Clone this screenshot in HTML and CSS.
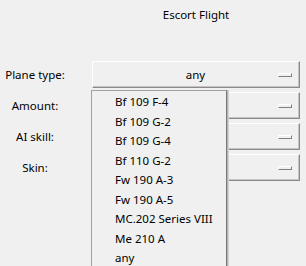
FILE: index.html
```html
<!DOCTYPE html>
<html lang="en">
<head>
    <meta charset="UTF-8">
    <title>Escort Flight</title>
    <link rel="stylesheet" href="styles.css">
</head>
<body>
    <div id="dialog">
        <div class="title-row">
            <div class="title">Escort Flight</div>
        </div>

        <div class="form">
            <div class="label">Plane type:</div>
            <div class="combo"><span class="value">any</span><span class="arrow"></span></div>

            <div class="label">Amount:</div>
            <div class="combo"><span class="value"></span><span class="arrow"></span></div>

            <div class="label">AI skill:</div>
            <div class="combo"><span class="value"></span><span class="arrow"></span></div>

            <div class="label">Skin:</div>
            <div class="combo"><span class="value"></span><span class="arrow"></span></div>
        </div>

        <!-- open list of the first combo -->
        <ul class="popup">
            <li>Bf 109 F-4</li>
            <li>Bf 109 G-2</li>
            <li>Bf 109 G-4</li>
            <li>Bf 110 G-2</li>
            <li>Fw 190 A-3</li>
            <li>Fw 190 A-5</li>
            <li>MC.202 Series VIII</li>
            <li>Me 210 A</li>
            <li>any</li>
        </ul>
    </div>
</body>
</html>
```

FILE: styles.css
```css
html, body {
    margin: 0;
    padding: 0;
    height: 100%;
    background-color: #f0f0f0;
}

body {
    font-family: "Noto Sans", "Open Sans", sans-serif;
    font-size: 11.5px;
    color: #000;
    overflow: hidden;
}

#dialog {
    position: relative;
    height: 100%;
    overflow: hidden;
}

.title-row {
    display: grid;
    grid-template-columns: 68px 1fr;
    column-gap: 24px;
    padding: 6px 6px 0 0;
    height: 55px;
    box-sizing: border-box;
}

.title {
    grid-column: 2;
    text-align: center;
    line-height: 18px;
}

.form {
    display: grid;
    grid-template-columns: 70px 1fr;
    grid-auto-rows: 27px;
    column-gap: 22px;
    row-gap: 4px;
    padding: 6px 6px 0 0;
}

.label {
    text-align: center;
    line-height: 27px;
    white-space: nowrap;
}

.combo {
    display: flex;
    align-items: center;
    box-sizing: border-box;
    border-top: 1px solid #fff;
    border-left: 1px solid #fff;
    border-right: 1px solid #8a8a8a;
    border-bottom: 1px solid #8a8a8a;
    box-shadow: inset -1px -1px 0 #c4c4c4;
    padding-right: 7px;
}

.combo .value {
    flex: 1;
    text-align: center;
    padding-left: 20px;
}

.combo .arrow {
    width: 14px;
    height: 4px;
    box-sizing: border-box;
    border-top: 1px solid #fff;
    border-left: 1px solid #fff;
    border-right: 1px solid #808080;
    border-bottom: 1px solid #808080;
}

.popup {
    position: absolute;
    left: 91px;
    top: 90px;
    width: 136px;
    height: 176px;
    margin: 0;
    padding: 1px 0 0 0;
    list-style: none;
    box-sizing: border-box;
    overflow: hidden;
    background-color: #f0f0f0;
    border: 1px solid #a0a0a0;
    border-right: 1px solid #7a7a7a;
    border-bottom: none;
    box-shadow: 1px 0 0 #b4b4b4, 2px 0 0 #d4d4d4;
}

.popup li {
    height: 19.5px;
    line-height: 19.5px;
    padding-left: 23px;
    white-space: nowrap;
}
```
